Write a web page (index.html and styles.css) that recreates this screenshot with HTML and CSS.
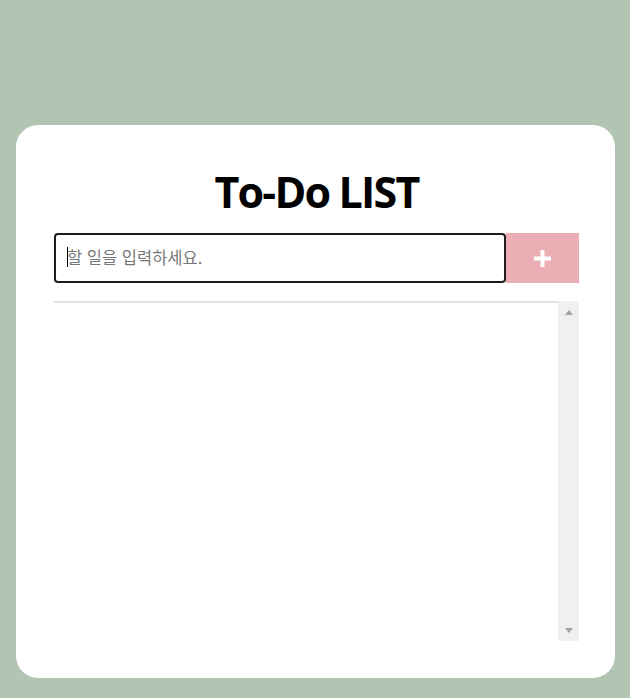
FILE: index.html
```html
<!DOCTYPE html>
<html lang="ko">
<head>
<meta charset="utf-8">
<title>To-Do LIST</title>
<link rel="stylesheet" href="styles.css">
</head>
<body>
  <main class="card">
    <h1 class="title">To-Do LIST</h1>
    <form class="add-row">
      <div class="input-wrap">
        <input class="todo-input" type="text" placeholder="할 일을 입력하세요.">
        <span class="caret"></span>
      </div>
      <button class="add-btn" type="button" aria-label="추가">
        <svg width="17" height="17" viewBox="0 0 17 17"><rect x="6.5" y="0" width="4" height="17" fill="#fff"/><rect x="0" y="6.5" width="17" height="4" fill="#fff"/></svg>
      </button>
    </form>
    <div class="list-box">
      <ul class="todo-list"></ul>
      <div class="scrollbar">
        <span class="arrow-up"></span>
        <span class="arrow-down"></span>
      </div>
    </div>
  </main>
</body>
</html>
```

FILE: styles.css
```css
* { box-sizing: border-box; }
html, body { margin: 0; padding: 0; }
body {
  background: #b2c5b2;
  width: 630px;
  height: 698px;
  padding-top: 125px;
  font-family: "Open Sans", "Noto Sans CJK KR", sans-serif;
}
.card {
  margin-left: 16px;
  width: 599px;
  height: 553px;
  background: #fff;
  border-radius: 22px;
  padding: 43px 36px 0 38px;
}
.title {
  margin: 0;
  font-size: 43px;
  line-height: 48px;
  font-weight: 700;
  text-align: center;
  color: #000;
  letter-spacing: -1.8px;
}
.add-row {
  margin: 17px 0 0;
  display: flex;
  height: 50px;
}
.input-wrap {
  position: relative;
  width: 452px;
  height: 50px;
}
.todo-input {
  width: 100%;
  height: 100%;
  border: 2px solid #1c1c1c;
  border-radius: 4px;
  padding: 0 0 3px 11px;
  margin: 0;
  font-family: "Noto Sans CJK KR", sans-serif;
  font-size: 16.5px;
  color: #333;
  outline: none;
  background: #fff;
}
.todo-input::placeholder { color: #777; }
.caret {
  position: absolute;
  left: 13px;
  top: 14px;
  width: 1px;
  height: 20px;
  background: #000;
}
.add-btn {
  width: 73px;
  height: 50px;
  border: none;
  margin: 0;
  padding: 0;
  background: #eaaeb4;
  display: flex;
  align-items: center;
  justify-content: center;
}
.list-box {
  margin-top: 18px;
  height: 340px;
  display: flex;
}
.todo-list {
  flex: 1;
  margin: 0;
  padding: 0;
  list-style: none;
  border-top: 2px solid #e3e3e3;
}
.scrollbar {
  width: 21px;
  background: #f0f0f0;
  display: flex;
  flex-direction: column;
  justify-content: space-between;
  align-items: center;
  padding: 9px 0 8px;
}
.arrow-up {
  width: 0; height: 0;
  border-left: 4px solid transparent;
  border-right: 4px solid transparent;
  border-bottom: 5px solid #a3a3a3;
}
.arrow-down {
  width: 0; height: 0;
  border-left: 4px solid transparent;
  border-right: 4px solid transparent;
  border-top: 5px solid #a3a3a3;
}
```
